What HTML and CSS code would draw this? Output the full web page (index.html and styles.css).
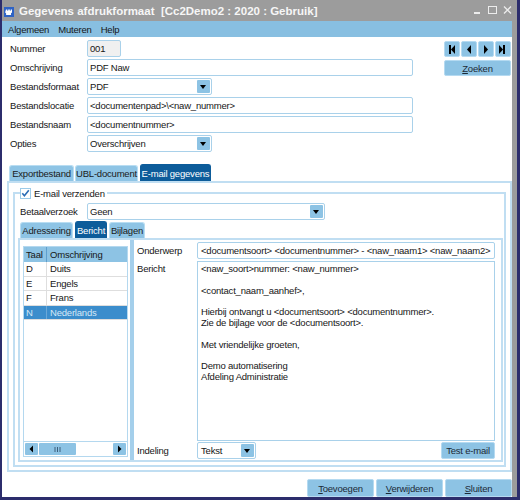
FILE: index.html
```html
<!DOCTYPE html>
<html>

<head>
	<meta charset='utf-8'>
	<title>Gegevens afdrukformaat</title>
	<link rel="stylesheet" href="styles.css">
</head>

<body>
	<div class="window">
		<div class="titlebar">
			<svg class="appicon" width="10" height="10" viewBox="0 0 10 10">
				<rect width="10" height="10" fill="#2f63c4" />
				<path d="M2 2.5h1.3v1.3h0.9v-1.3h1.6v1.3h0.9v-1.3h1.3v3l-1 0.8v1.7h-4.9v-1.7l-1-0.8z" fill="#fff" />
			</svg>
			<span class="title">Gegevens afdrukformaat&nbsp; [Cc2Demo2 : 2020 : Gebruik]</span>
			<svg class="controls" width="40" height="10" viewBox="0 0 40 10">
				<rect x="1" y="6" width="6" height="2" fill="#ececec" />
				<rect x="15.5" y="0.5" width="8" height="7" fill="none" stroke="#ececec" />
				<path d="M31 0.5l7 7M38 0.5l-7 7" stroke="#ececec" stroke-width="1.3" />
			</svg>
		</div>

		<div class="client">
			<div class="menubar">
				<span>Algemeen</span>
				<span>Muteren</span>
				<span>Help</span>
			</div>

			<div class="content">
				<div class="top">
					<div class="form">
						<label>Nummer</label>
						<div><div class="field ro nr">001</div></div>
						<label>Omschrijving</label>
						<div class="field">PDF Naw</div>
						<label>Bestandsformaat</label>
						<div><div class="field select short">PDF<span class="dd"></span></div></div>
						<label>Bestandslocatie</label>
						<div class="field">&lt;documentenpad&gt;\&lt;naw_nummer&gt;</div>
						<label>Bestandsnaam</label>
						<div class="field">&lt;documentnummer&gt;</div>
						<label>Opties</label>
						<div><div class="field select short">Overschrijven<span class="dd"></span></div></div>
					</div>

					<div class="nav">
						<div class="navbtns">
							<button class="btn icon"><svg width="14" height="14" viewBox="1 1 14 14"><rect x="5" y="4" width="2" height="9" /><path d="M11 4L7 8.5L11 13z" /></svg></button>
							<button class="btn icon"><svg width="14" height="14" viewBox="1 1 14 14"><path d="M10 4L6 8.5L10 13z" /></svg></button>
							<button class="btn icon"><svg width="14" height="14" viewBox="1 1 14 14"><path d="M6 4L10 8.5L6 13z" /></svg></button>
							<button class="btn icon"><svg width="14" height="14" viewBox="1 1 14 14"><path d="M4 4L8 8.5L4 13z" /><rect x="8" y="4" width="2" height="9" /></svg></button>
						</div>
						<button class="btn zoek"><u>Z</u>oeken</button>
					</div>
				</div>

				<div class="tabs">
					<div class="tab t1">Exportbestand</div>
					<div class="tab t2">UBL-document</div>
					<div class="tab t3 active">E-mail gegevens</div>
				</div>

				<div class="tabpanel">
					<fieldset class="group">
						<legend>
							<svg class="check" width="11" height="11" viewBox="0 0 11 11">
								<rect x="0.5" y="0.5" width="10" height="10" fill="#fff" stroke="#9ccbe9" />
								<path d="M2.3 5.2L4.4 7.8L8.8 2.2" fill="none" stroke="#2b6cb5" stroke-width="1.6" />
							</svg>
							E-mail verzenden
						</legend>

						<div class="row">
							<label>Betaalverzoek</label>
							<div class="field select wide">Geen<span class="dd"></span></div>
						</div>

						<div class="tabs small">
							<div class="tab s1">Adressering</div>
							<div class="tab s2 active">Bericht</div>
							<div class="tab s3">Bijlagen</div>
						</div>

						<div class="inner">
							<div class="list">
								<div class="lrow lhead">
									<span>Taal</span><span>Omschrijving</span>
								</div>
								<div class="lbody">
									<div class="lrow"><span>D</span><span>Duits</span></div>
									<div class="lrow"><span>E</span><span>Engels</span></div>
									<div class="lrow"><span>F</span><span>Frans</span></div>
									<div class="lrow sel"><span>N</span><span>Nederlands</span></div>
								</div>
								<div class="hscroll">
									<span class="sbtn"><svg width="13" height="12" viewBox="0 0 13 12"><path d="M8 2.5L4.5 6L8 9.5z" /></svg></span>
									<span class="thumb"><svg width="7" height="5" viewBox="0 0 7 5"><path d="M1 0v5M3.5 0v5M6 0v5" stroke="#3c5f7c" /></svg></span>
									<span class="track"></span>
									<span class="sbtn"><svg width="13" height="12" viewBox="0 0 13 12"><path d="M5 2.5L8.5 6L5 9.5z" /></svg></span>
								</div>
							</div>

							<div class="splitter"></div>

							<div class="detail">
								<label>Onderwerp</label>
								<div class="field">&lt;documentsoort&gt; &lt;documentnummer&gt; - &lt;naw_naam1&gt; &lt;naw_naam2&gt;</div>
								<label class="top-label">Bericht</label>
								<div class="message">&lt;naw_soort&gt;nummer: &lt;naw_nummer&gt;

&lt;contact_naam_aanhef&gt;,

Hierbij ontvangt u &lt;documentsoort&gt; &lt;documentnummer&gt;.
Zie de bijlage voor de &lt;documentsoort&gt;.

Met vriendelijke groeten,

Demo automatisering
Afdeling Administratie</div>
								<label>Indeling</label>
								<div class="bottomrow">
									<div class="field select tekst">Tekst<span class="dd"></span></div>
									<button class="btn test">Test e-mail</button>
								</div>
							</div>
						</div>
					</fieldset>
				</div>

				<div class="footer">
					<button class="btn"><u>T</u>oevoegen</button>
					<button class="btn"><u>V</u>erwijderen</button>
					<button class="btn"><u>S</u>luiten</button>
				</div>
			</div>
		</div>
	</div>
</body>

</html>
```

FILE: styles.css
```css
* {
	box-sizing: border-box;
}

body {
	margin: 0;
	font-family: "Liberation Sans", Arial, sans-serif;
	font-size: 9.5px;
	letter-spacing: -0.2px;
	color: #161616;
}

.window {
	width: 520px;
	height: 500px;
	display: flex;
	flex-direction: column;
	background: #9c9c9c;
	border-left: 2px solid #2c2d6c;
	border-right: 3px solid #2c2d6c;
	border-bottom: 3px solid #2c2d6c;
}

/* title bar */
.titlebar {
	height: 21px;
	flex: none;
	display: flex;
	align-items: center;
	padding-left: 2px;
	color: #f6f6f6;
}

.appicon {
	margin-right: 5px;
	margin-top: 2px;
}

.title {
	font-weight: bold;
	font-size: 11.5px;
	letter-spacing: 0;
	margin-top: 1px;
}

.controls {
	margin-left: auto;
	margin-right: 4px;
	margin-top: 1px;
}

.client {
	flex: 1;
	display: flex;
	flex-direction: column;
	margin-right: 5px;
	background: #fff;
}

.menubar {
	height: 16px;
	flex: none;
	display: flex;
	align-items: center;
	gap: 9px;
	padding-left: 6px;
	background: #88bfe1;
}

.content {
	flex: 1;
	display: flex;
	flex-direction: column;
	padding: 3px 0 0 5px;
}

/* top form */
.top {
	display: flex;
	margin-left: 3px;
}

.form {
	width: 403px;
	display: grid;
	grid-template-columns: 77px 1fr;
	row-gap: 2px;
	align-items: center;
}

.field {
	height: 17px;
	display: flex;
	align-items: center;
	padding: 0 1px 0 2px;
	border: 1px solid #a9d1ea;
	border-radius: 2px;
	background: #fff;
	white-space: nowrap;
	overflow: hidden;
}

.field.ro {
	background: #f0f0f0;
}

.nr {
	width: 34px;
}

.short {
	width: 125px;
}

.dd {
	width: 13px;
	height: 13px;
	margin-left: auto;
	flex: none;
	border-radius: 1px;
	background: #8dc3e4;
	position: relative;
}

.dd::after {
	content: "";
	position: absolute;
	left: 3px;
	top: 5px;
	border-left: 3.5px solid transparent;
	border-right: 3.5px solid transparent;
	border-top: 4px solid #000;
}

.nav {
	margin-left: auto;
	margin-right: 1px;
	margin-top: 1px;
	width: 67px;
	display: flex;
	flex-direction: column;
	gap: 3px;
}

.navbtns {
	display: grid;
	grid-template-columns: repeat(4, 16px);
	gap: 1px;
}

.btn {
	font: inherit;
	letter-spacing: inherit;
	color: #1c2a36;
	background: #8dc3e4;
	border: 1px solid #b5daf1;
	border-radius: 2px;
	padding: 0;
	height: 17px;
}

.btn.icon {
	width: 16px;
	height: 16px;
	display: flex;
	align-items: center;
	justify-content: center;
}

.btn.icon svg {
	fill: #000;
	flex: none;
}

.zoek {
	height: 16px;
}

/* tabs */
.tabs {
	display: flex;
	gap: 1px;
	height: 16px;
	margin: 13px 0 0 2px;
}

.tab {
	display: flex;
	align-items: center;
	justify-content: center;
	white-space: nowrap;
	background: #8ec4e5;
	border: 1px solid #b9ddf2;
	border-bottom: 0;
	border-radius: 3px 3px 0 0;
	color: #1a1a1a;
}

.tab.active {
	background: #0d5c9a;
	border-color: #0d5c9a;
	color: #fff;
	height: 17px;
	margin-top: -1px;
}

.t1 {
	width: 65px;
}

.t2 {
	width: 63px;
}

.t3 {
	width: 71px;
	margin-left: 1px;
}

.tabpanel {
	border: 2px solid #c0def2;
	padding-bottom: 3px;
}

.group {
	margin: 4px 4px 0;
	padding: 0 1px 3px 3px;
	border: 2px solid #c0def2;
	min-width: 0;
}

.group legend {
	display: flex;
	align-items: center;
	gap: 3px;
	padding: 0 2px 0 0;
	margin-left: 2px;
	height: 12px;
}

.row {
	display: flex;
	align-items: center;
	margin: 4px 0 0 2px;
}

.row label {
	width: 67px;
}

.wide {
	width: 238px;
}

.tabs.small {
	margin: 2px 0 0 2px;
	gap: 2px;
}

.s1 {
	width: 53px;
}

.s2 {
	width: 32px;
}

.s3 {
	width: 36px;
}

/* inner panel */
.inner {
	height: 224px;
	display: flex;
	border: 2px solid #c0def2;
	padding: 0 6px 0 3px;
}

.list {
	width: 105px;
	margin: 6px 0 3px;
	display: flex;
	flex-direction: column;
	border: 1px solid #b4d8ef;
}

.lrow {
	display: grid;
	grid-template-columns: 23px 1fr;
	height: 14.5px;
	align-items: stretch;
	border-bottom: 1px solid #dedede;
}

.lrow span {
	display: flex;
	align-items: center;
	padding-left: 2px;
}

.lrow span:first-child {
	border-right: 1px solid #dedede;
}

.lrow span:last-child {
	padding-left: 3px;
}

.lhead {
	height: 15px;
	background: #8dc3e4;
	border-bottom: 0;
}

.lhead span:first-child {
	border-right-color: #5f9fcd;
}

.lrow.sel {
	background: #3b8dcc;
	color: #d5e8f6;
}

.lrow.sel span:first-child {
	border-right-color: #6aa8d8;
}

.lbody {
	flex: 1;
}

.hscroll {
	height: 15px;
	display: flex;
	gap: 1px;
	padding: 1px;
	border-top: 1px solid #b4d8ef;
}

.sbtn,
.thumb {
	display: flex;
	align-items: center;
	justify-content: center;
	background: #8dc3e4;
	border-radius: 1px;
}

.sbtn {
	width: 13px;
}

.thumb {
	width: 37px;
}

.track {
	flex: 1;
}

.splitter {
	width: 4px;
	margin-left: 2px;
	background: #a4cfeb;
}

.detail {
	flex: 1;
	margin-left: 3px;
	padding: 2px 0 1px;
	display: grid;
	grid-template-columns: 60px 1fr;
	grid-template-rows: 17px 1fr 17px;
	row-gap: 1px;
	align-items: center;
}

.detail .field {
	padding-left: 3px;
}

.detail .message {
	align-self: stretch;
	margin-top: 1px;
	border: 1px solid #a9d1ea;
	padding: 2px 3px;
	line-height: 10.8px;
	white-space: pre-line;
}

.top-label {
	align-self: start;
	margin-top: 3px;
}

.bottomrow {
	display: flex;
	height: 17px;
}

.tekst {
	width: 59px;
}

.test {
	margin-left: auto;
	width: 54px;
}

.footer {
	display: flex;
	justify-content: flex-end;
	gap: 2px;
	margin-top: 7px;
}

.footer .btn {
	width: 67px;
	height: 18px;
}
```
